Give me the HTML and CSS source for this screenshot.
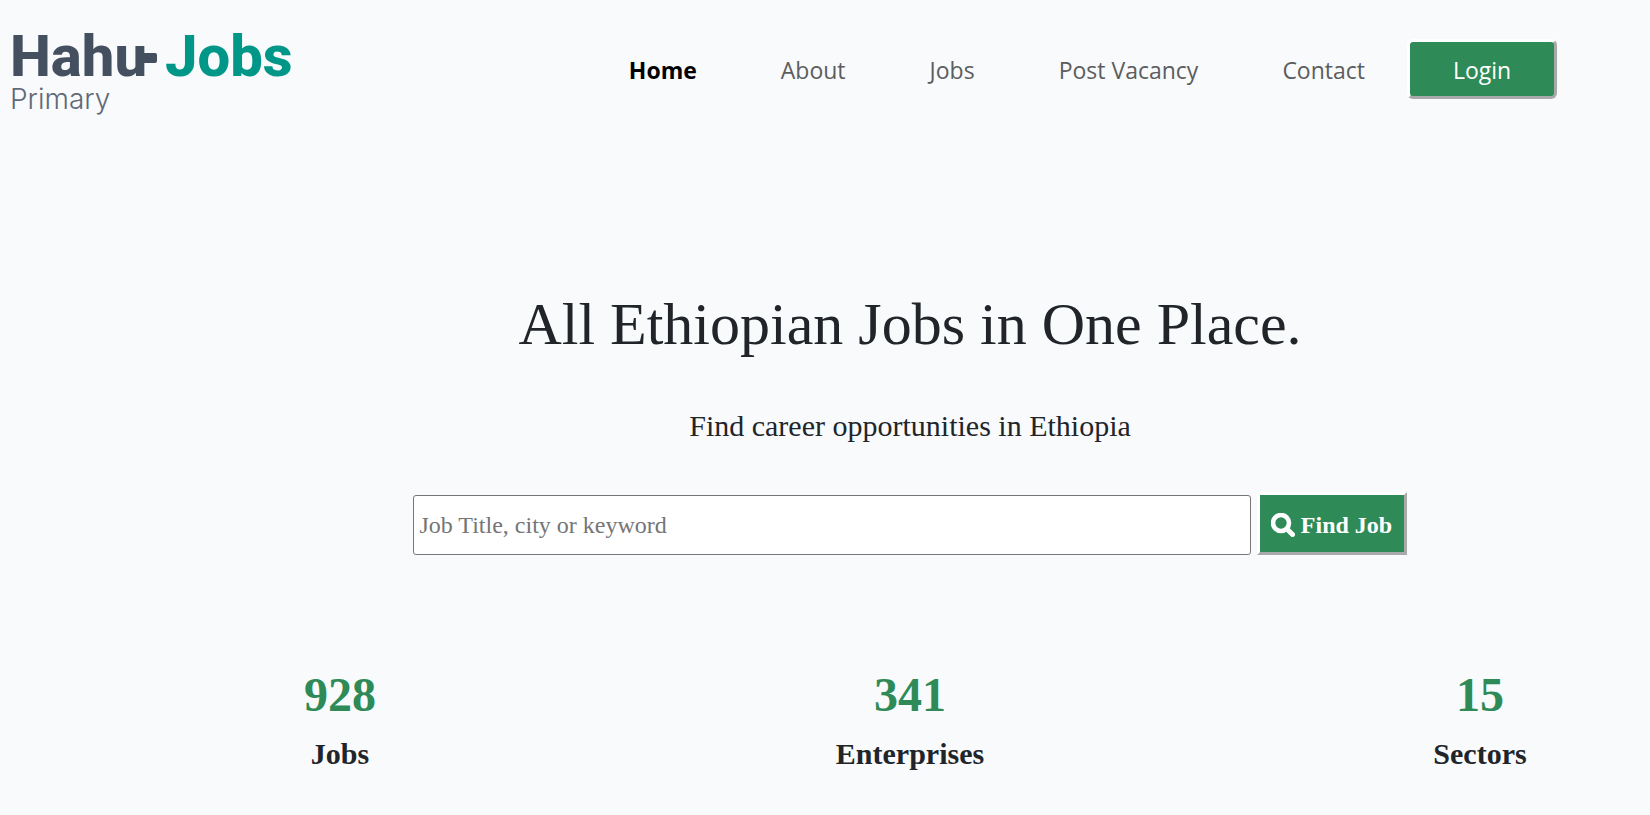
FILE: index.html
```
<!DOCTYPE html>
<html lang="en">
<head>
<meta charset="utf-8">
<title>Hahu Jobs</title>
<link rel="stylesheet" href="styles.css">
</head>
<body>
<header class="site-header">
  <a class="logo" href="#">
    <span class="wordmark"><span class="hahu">Hahu</span><span class="dash"></span><span class="jobs">Jobs</span></span>
    <span class="tagline">Primary</span>
  </a>
  <nav class="nav">
    <a class="active" href="#">Home</a>
    <a href="#">About</a>
    <a href="#">Jobs</a>
    <a href="#">Post Vacancy</a>
    <a href="#">Contact</a>
  </nav>
  <button class="login" type="button">Login</button>
</header>
<main class="hero">
  <h1>All Ethiopian Jobs in One Place.</h1>
  <p class="subtitle">Find career opportunities in Ethiopia</p>
  <form class="search">
    <input type="text" placeholder="Job Title, city or keyword" aria-label="Job Title, city or keyword">
    <button type="button">
      <svg viewBox="0 0 24 24" width="24" height="24" aria-hidden="true"><circle cx="10" cy="10" r="8" fill="none" stroke="currentColor" stroke-width="4.6"/><path d="M16 16l5.5 5.5" stroke="currentColor" stroke-width="5" stroke-linecap="round"/></svg>
      <span>Find Job</span>
    </button>
  </form>
  <section class="stats">
    <div><strong>928</strong><h2>Jobs</h2></div>
    <div><strong>341</strong><h2>Enterprises</h2></div>
    <div><strong>15</strong><h2>Sectors</h2></div>
  </section>
</main>
</body>
</html>
```
FILE: styles.css
```
* { box-sizing: border-box; }
body {
  margin: 0;
  background: #f8fafc;
  color: #212529;
  font-family: "Liberation Serif", "Times New Roman", serif;
}
.site-header {
  display: flex;
  align-items: flex-start;
  height: 120px;
  padding: 20px 93px 0 10px;
  font-family: "Open Sans", "Segoe UI", sans-serif;
}
.logo { text-decoration: none; color: #444f60; }
.wordmark {
  display: flex;
  align-items: flex-start;
  height: 64px;
  font: 800 58px/72px Roboto, sans-serif;
}
.dash { width: 14px; height: 10px; margin: 33px 8px 0 -4px; border-radius: 0 2px 2px 0; background: #444f60; }
.jobs { color: #009688; }
.tagline { display: block; font: 300 28px/30px Inter, sans-serif; color: #5f6978; }
.nav {
  display: flex;
  gap: 84px;
  margin: 34px 42px 0 auto;
  font-size: 23px;
  line-height: 32px;
}
.nav a { color: #5c5d5e; text-decoration: none; white-space: nowrap; }
.nav .active { color: #000; font-weight: 700; }
.login {
  width: 150px;
  height: 60px;
  margin-top: 19px;
  padding: 2px 0 0;
  border: 3px solid;
  border-color: #fff #a9a9a9 #a9a9a9 #fff;
  border-radius: 6px;
  background: seagreen;
  color: #fff;
  font: 23px "Open Sans", "Segoe UI", sans-serif;
}
.hero { margin-left: 170px; padding-top: 168px; text-align: center; }
h1 { margin: 0; font-size: 60px; line-height: 72px; font-weight: 400; }
.subtitle { margin: 43px 0 0; font-size: 30px; line-height: 45px; }
.search { display: flex; align-items: flex-end; gap: 6px; width: 67.1%; margin: 44px auto 0; }
.search input {
  flex: 1;
  min-width: 0;
  height: 60px;
  padding: 0 5px;
  border: 1px solid #767676;
  border-radius: 3px;
  background: #fff;
  font: 24px "Liberation Serif", "Times New Roman", serif;
}
.search input::placeholder { color: #757575; }
.search button {
  display: flex;
  align-items: center;
  justify-content: center;
  gap: 6px;
  width: 150px;
  height: 63px;
  padding: 3px 0 0;
  border: 3px solid;
  border-color: #fff #a9a9a9 #a9a9a9 #fff;
  background: seagreen;
  color: #fff;
  font: bold 24px "Liberation Serif", "Times New Roman", serif;
}
.stats { display: grid; grid-template-columns: repeat(3, 1fr); column-gap: 230px; margin-top: 112px; }
.stats strong { display: block; font-size: 48px; line-height: 56px; color: seagreen; }
.stats h2 { margin: 13px 0 0; font-size: 30px; line-height: 36px; }
```
